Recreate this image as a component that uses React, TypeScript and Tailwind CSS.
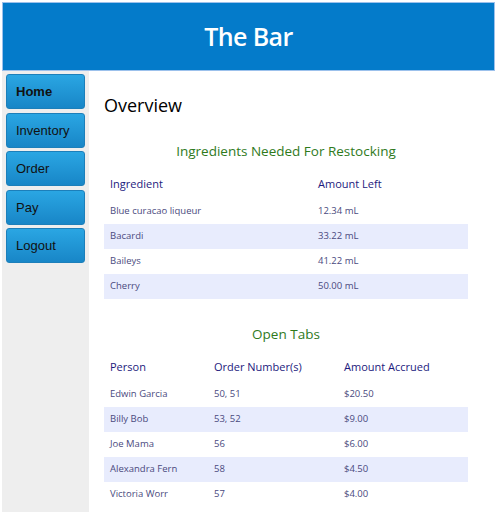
import React from 'react';

const navItems = ['Home', 'Inventory', 'Order', 'Pay', 'Logout'];

const restock = [
  { name: 'Blue curacao liqueur', amount: '12.34 mL' },
  { name: 'Bacardi', amount: '33.22 mL' },
  { name: 'Baileys', amount: '41.22 mL' },
  { name: 'Cherry', amount: '50.00 mL' },
];

const tabs = [
  { person: 'Edwin Garcia', orders: '50, 51', amount: '$20.50' },
  { person: 'Billy Bob', orders: '53, 52', amount: '$9.00' },
  { person: 'Joe Mama', orders: '56', amount: '$6.00' },
  { person: 'Alexandra Fern', orders: '58', amount: '$4.50' },
  { person: 'Victoria Worr', orders: '57', amount: '$4.00' },
];

const App: React.FC = () => {
  return (
    <div className="h-[512px] overflow-hidden bg-white pt-[2px] pl-[2px] font-['Open_Sans',sans-serif]">
      {/* Header */}
      <div className="w-[493px] h-[69px] bg-[#047bca] border border-[#9cc1ec] flex items-center justify-center">
        <h1 className="text-white text-[25px] font-semibold font-['Open_Sans',sans-serif] tracking-tight">The Bar</h1>
      </div>

      <div className="flex">
        {/* Sidebar */}
        <div className="w-[87px] h-[442px] bg-[#eeeeee] px-[4px] pt-[3px] flex flex-col gap-[3.5px]">
          {navItems.map((item, i) => (
            <button
              key={item}
              className={`h-[35px] w-[79px] rounded-[3px] border border-[#1c7fba] bg-gradient-to-b from-[#2aa6e3] to-[#1886c7] text-left pl-[9px] pt-[1px] text-[13px] text-[#111] font-['Liberation_Sans',sans-serif] ${i === 0 ? 'font-bold' : ''}`}
            >
              {item}
            </button>
          ))}
        </div>

        {/* Main content */}
        <div className="pl-[15px] pt-[20px] w-[364px] box-content">
          <h2 className="text-[18px] text-black leading-[28px]">Overview</h2>

          <h3 className="mt-[23px] text-center text-[13.5px] text-[#2f7a1c] leading-[18px]">Ingredients Needed For Restocking</h3>
          <table className="w-[364px] mt-[9px] border-collapse text-left">
            <thead>
              <tr className="h-[30px]">
                <th className="w-[208px] pl-[6px] font-normal text-[11px] text-[#1c1a7d]">Ingredient</th>
                <th className="pl-[6px] font-normal text-[11px] text-[#1c1a7d]">Amount Left</th>
              </tr>
            </thead>
            <tbody>
              {restock.map((r, i) => (
                <tr key={r.name} className={`h-[25px] ${i % 2 === 1 ? 'bg-[#e8ecfd]' : ''}`}>
                  <td className="pl-[6px] text-[9.5px] text-[#4a4a7e]">{r.name}</td>
                  <td className="pl-[6px] text-[9.5px] text-[#4a4a7e]">{r.amount}</td>
                </tr>
              ))}
            </tbody>
          </table>

          <h3 className="mt-[26px] text-center text-[13.5px] text-[#2f7a1c] leading-[18px]">Open Tabs</h3>
          <table className="w-[364px] mt-[9px] border-collapse text-left">
            <thead>
              <tr className="h-[30px]">
                <th className="w-[104px] pl-[6px] font-normal text-[11px] text-[#1c1a7d]">Person</th>
                <th className="w-[130px] pl-[6px] font-normal text-[11px] text-[#1c1a7d]">Order Number(s)</th>
                <th className="pl-[6px] font-normal text-[11px] text-[#1c1a7d]">Amount Accrued</th>
              </tr>
            </thead>
            <tbody>
              {tabs.map((t, i) => (
                <tr key={t.person} className={`h-[25px] ${i % 2 === 1 ? 'bg-[#e8ecfd]' : ''}`}>
                  <td className="pl-[6px] text-[9.5px] text-[#4a4a7e]">{t.person}</td>
                  <td className="pl-[6px] text-[9.5px] text-[#4a4a7e]">{t.orders}</td>
                  <td className="pl-[6px] text-[9.5px] text-[#4a4a7e]">{t.amount}</td>
                </tr>
              ))}
            </tbody>
          </table>
        </div>
      </div>
    </div>
  );
};

export default App;
